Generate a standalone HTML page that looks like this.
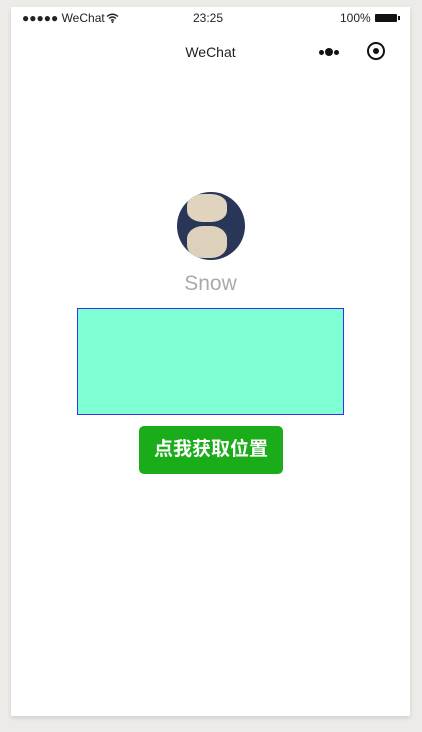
<!DOCTYPE html>
<html><head><meta charset="utf-8"><style>
body{margin:0;width:422px;height:732px;background:#edebe7;position:relative;overflow:hidden;font-family:"Liberation Sans","Noto Sans CJK SC",sans-serif}
.ph{position:absolute;left:11px;top:7px;width:399px;height:709px;background:#fff;box-shadow:0 2px 4px rgba(0,0,0,.12)}
.a{position:absolute}
</style></head><body>
<div class="ph">
<div class="a" style="left:11px;top:4px;font-size:12px;color:#222">●●●●● WeChat</div>
<svg class="a" style="left:95px;top:6px" width="13" height="10" viewBox="0 0 13 10"><path d="M1 3.5Q6.5-1 12 3.5M3 5.5Q6.5 2.5 10 5.5M5 7.5Q6.5 6 8 7.5" stroke="#222" stroke-width="1.4" fill="none"/><circle cx="6.5" cy="9" r="1" fill="#222"/></svg>
<div class="a" style="left:182px;top:4px;font-size:12px;color:#222">23:25</div>
<div class="a" style="left:329px;top:4px;font-size:12px;color:#222">100%</div>
<div class="a" style="left:364px;top:7px;width:22px;height:8px;background:#111;border-radius:1px"></div>
<div class="a" style="left:387px;top:9px;width:2px;height:4px;background:#111"></div>
<div class="a" style="left:0;width:399px;top:37px;text-align:center;font-size:14px;color:#222">WeChat</div>
<div class="a" style="left:308px;top:43px;width:5px;height:5px;border-radius:50%;background:#111"></div>
<div class="a" style="left:314px;top:41px;width:8px;height:8px;border-radius:50%;background:#111"></div>
<div class="a" style="left:323px;top:43px;width:5px;height:5px;border-radius:50%;background:#111"></div>
<div class="a" style="left:356px;top:35px;width:14px;height:14px;border:2px solid #111;border-radius:50%"></div>
<div class="a" style="left:362px;top:41px;width:6px;height:6px;background:#111;border-radius:50%"></div>
<div class="a" style="left:166px;top:185px;width:68px;height:68px;border-radius:50%;overflow:hidden;background:#2a3658">
<div class="a" style="left:10px;top:2px;width:40px;height:28px;background:#e0d4bf;border-radius:40%"></div>
<div class="a" style="left:10px;top:34px;width:40px;height:32px;background:#ded1bb;border-radius:40%"></div>
</div>
<div class="a" style="left:0;width:399px;top:265px;text-align:center;font-size:21px;color:#aaa">Snow</div>
<div class="a" style="left:66px;top:301px;width:265px;height:105px;background:#7fffd4;border:1px solid #3333ee"></div>
<div class="a" style="left:128px;top:419px;width:144px;height:48px;background:#1aad19;border-radius:5px;color:#fff;font-size:19px;font-weight:bold;line-height:48px;text-align:center">点我获取位置</div>
</div>
</body></html>
